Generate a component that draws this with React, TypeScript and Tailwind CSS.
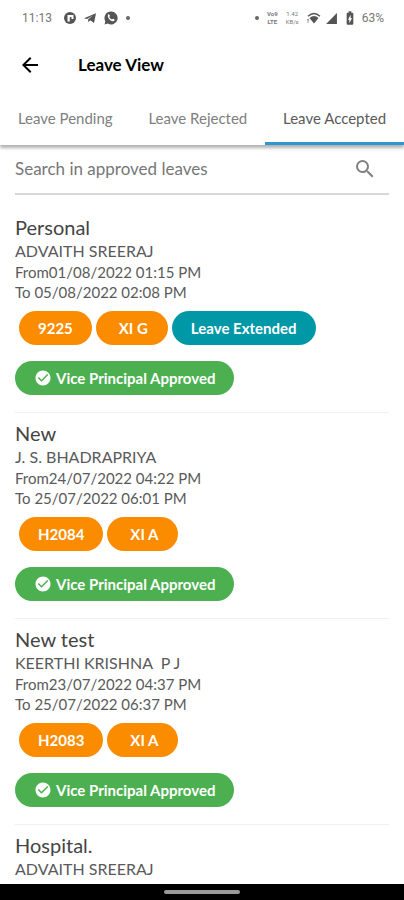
import { MdArrowBack, MdBatteryChargingFull, MdCheckCircle, MdSearch, MdSignalCellular4Bar } from "react-icons/md";

type Leave = {
  reason: string;
  student: string;
  from: string;
  to: string;
  admissionNo: string;
  batch: string;
  extended?: boolean;
};

const TABS = ["Leave Pending", "Leave Rejected", "Leave Accepted"];

const LEAVES: Leave[] = [
  {
    reason: "Personal",
    student: "ADVAITH SREERAJ",
    from: "01/08/2022 01:15 PM",
    to: "05/08/2022 02:08 PM",
    admissionNo: "9225",
    batch: "XI G",
    extended: true,
  },
  {
    reason: "New",
    student: "J. S. BHADRAPRIYA",
    from: "24/07/2022 04:22 PM",
    to: "25/07/2022 06:01 PM",
    admissionNo: "H2084",
    batch: "XI A",
  },
  {
    reason: "New test",
    student: "KEERTHI KRISHNA  P J",
    from: "23/07/2022 04:37 PM",
    to: "25/07/2022 06:37 PM",
    admissionNo: "H2083",
    batch: "XI A",
  },
];

function StatusBar() {
  return (
    <div className="flex h-9 shrink-0 items-center justify-between pr-5 pl-[22px] font-[Roboto,sans-serif] text-xs text-[#777]">
      <div className="flex items-center">
        <span className="mr-3">11:13</span>
        <svg viewBox="0 0 12 12" className="mr-2 size-3" aria-hidden="true">
          <circle cx="6" cy="6" r="6" fill="#555" />
          <path d="M3.500 9.500V3H9.500v4H7.500V5H5.800v4.500z" fill="#fff" />
        </svg>
        <svg viewBox="0 0 12 12" className="mr-2 size-3" aria-hidden="true">
          <path d="M0 6.200 12 1.200 10 11 6.200 8.300 4.500 10.200 4 7.400 9 3.600 3 7z" fill="#555" />
        </svg>
        <svg viewBox="0 0 14 14" className="mr-2 size-[14px]" aria-hidden="true">
          <path d="M7 .5a6.500 6.500 0 0 0-5.700 9.700L.6 13.400l3.200-.8A6.500 6.500 0 1 0 7 .5z" fill="#555" />
          <path d="M4 3.800c.6-.8 1.100-.6 1.400 0l.5 1c.1.400-.6.800-.5 1.200.4 1 1.400 2 2.500 2.400.5.100.8-.8 1.300-.6l1.300.7c.4.400-.2 1.600-1.200 1.800C6.800 10.700 3 6.800 4 3.800z" fill="#fff" />
        </svg>
        <span className="size-1 rounded-full bg-[#666]" />
      </div>
      <div className="flex items-center">
        <span className="mr-2 size-1 rounded-full bg-[#666]" />
        <span className="mr-2 flex flex-col items-center text-[6px] leading-[8px] font-bold">
          <span>Vo9</span>
          <span>LTE</span>
        </span>
        <span className="mr-2 flex flex-col items-center text-[6px] leading-[8px]">
          <span>1.42</span>
          <span>KB/s</span>
        </span>
        <svg viewBox="0 0 14 12" className="mr-1 h-3 w-[14px]" aria-hidden="true">
          <path d="M1 4.200Q7-1.200 13 4.200" fill="none" stroke="#555" strokeWidth="1.300" />
          <path d="M2.500 6Q7 1.800 11.500 6L7 11.500z" fill="#555" />
          <path d="M1 7v4M0 8.500 1 7l1 1.500" fill="none" stroke="#888" strokeWidth=".8" />
        </svg>
        <MdSignalCellular4Bar className="mr-1 size-[13px] text-[#555]" />
        <MdBatteryChargingFull className="mr-1 size-4 text-[#555]" />
        <span>63%</span>
      </div>
    </div>
  );
}

function LeaveItem({ leave }: { leave: Leave }) {
  return (
    <li className="border-b border-[#f0f0f0] pt-[7px] pb-[17px]">
      <h2 className="text-xl leading-[26px] text-[#444]">{leave.reason}</h2>
      <p className="text-base leading-[22px] whitespace-pre">{leave.student}</p>
      <p className="text-[15px] leading-5">From{leave.from}</p>
      <p className="text-[15px] leading-5">To {leave.to}</p>
      <div className="mt-[9px] ml-1 flex gap-1 text-[15px] leading-[34px] font-bold text-white">
        <span className="rounded-full bg-[#fb8c00] px-[19px]">{leave.admissionNo}</span>
        <span className="rounded-full bg-[#fb8c00] pr-5 pl-[23px]">{leave.batch}</span>
        {leave.extended && <span className="rounded-full bg-[#0097a7] px-[19px]">Leave Extended</span>}
      </div>
      <div className="mt-4 inline-flex h-[34px] items-center gap-1 rounded-full bg-[#4caf50] px-[19px] align-top text-[15px] font-bold text-white">
        <MdCheckCircle className="size-[18px]" />
        Vice Principal Approved
      </div>
    </li>
  );
}

export default function App() {
  return (
    <div className="flex h-screen flex-col overflow-hidden bg-white font-[Lato,sans-serif] text-[#5a5a5a]">
      <StatusBar />
      <header className="relative shrink-0">
        <div className="flex h-[58px] items-center gap-9 px-[18px] text-black">
          <button type="button" aria-label="Back">
            <MdArrowBack className="size-6" />
          </button>
          <h1 className="text-[17px] font-bold">Leave View</h1>
        </div>
        <nav className="flex bg-white text-[15px] shadow-[0_3px_3px_rgba(0,0,0,0.3)]">
          {TABS.map((tab) => (
            <button
              key={tab}
              type="button"
              aria-current={tab === "Leave Accepted" ? "page" : undefined}
              className="h-[51px] flex-auto border-b-[3px] border-transparent px-4 whitespace-nowrap text-[#808080] aria-[current]:border-[#2f97d0] aria-[current]:text-[#5a5a5a]"
            >
              {tab}
            </button>
          ))}
        </nav>
      </header>
      <main className="min-h-0 flex-1 overflow-y-auto px-[15px] [scrollbar-width:none]">
        <div className="flex h-[50px] items-center border-b-2 border-[#d8d8d8] pr-3">
          <input
            type="search"
            aria-label="Search in approved leaves"
            placeholder="Search in approved leaves"
            className="min-w-0 flex-1 text-[17px] outline-none placeholder:text-[#777]"
          />
          <button type="button" aria-label="Search">
            <MdSearch className="size-6 text-[#808080]" />
          </button>
        </div>
        <ul className="pt-3">
          {LEAVES.map((leave) => (
            <LeaveItem key={leave.admissionNo} leave={leave} />
          ))}
          <li className="pt-[7px]">
            <h2 className="text-xl leading-[26px] text-[#444]">Hospital.</h2>
            <p className="text-base leading-[22px]">ADVAITH SREERAJ</p>
          </li>
        </ul>
      </main>
      <footer className="flex h-4 shrink-0 items-center justify-center bg-black">
        <span className="h-1 w-19 rounded-full bg-[#999]" />
      </footer>
    </div>
  );
}
